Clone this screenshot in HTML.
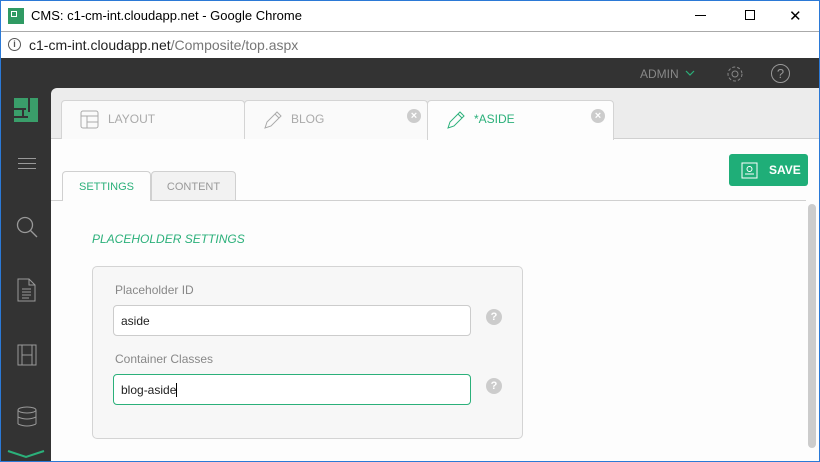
<!DOCTYPE html>
<html><head><meta charset="utf-8"><style>
*{box-sizing:border-box;margin:0;padding:0}
body{width:820px;height:462px;overflow:hidden;background:#fff;font-family:"Liberation Sans",sans-serif;position:relative}
.a{position:absolute}
.win{left:0;top:0;width:820px;height:462px;border:1px solid #2b79d6}
.tab{position:absolute;top:100px;height:39px;background:#fafafa;border:1px solid #d4d4d4;border-bottom:none;border-radius:4px 4px 0 0;font-size:12px;color:#aaa;padding:11px 0 0 46px}
.x{position:absolute;top:8px;width:14px;height:14px;border-radius:50%;background:#ccc;color:#fff;font-size:11px;line-height:14px;text-align:center;font-weight:bold}
.inp{position:absolute;left:113px;width:358px;height:31px;border:1px solid #ccc;border-radius:4px;background:#fff;font-size:12px;color:#222;padding:8px 0 0 7px}
.q{position:absolute;left:486px;width:16px;height:16px;border-radius:50%;background:#ccc;color:#fff;font-size:11px;font-weight:bold;line-height:16px;text-align:center}
</style></head><body>
<div class="a" style="left:0;top:0;width:820px;height:31px;background:#fff"></div>
<div class="a" style="left:8px;top:8px;width:16px;height:16px;background:#2f9a63"></div>
<div class="a" style="left:11px;top:11px;width:6px;height:6px;border:1px solid #fff"></div>
<div class="a" style="left:31px;top:8px;font-size:13px;color:#000">CMS: c1-cm-int.cloudapp.net - Google Chrome</div>
<div class="a" style="left:695px;top:15px;width:11px;height:1px;background:#000"></div>
<div class="a" style="left:745px;top:10px;width:10px;height:10px;border:1px solid #000"></div>
<div class="a" style="left:789px;top:7px;font-size:15px;color:#000">✕</div>
<div class="a" style="left:0;top:31px;width:820px;height:1px;background:#aaa"></div>
<div class="a" style="left:0;top:32px;width:820px;height:26px;background:#fff"></div>
<div class="a" style="left:8px;top:38px;width:13px;height:13px;border:1.5px solid #555;border-radius:50%;font-size:9px;text-align:center;line-height:10px;color:#555;font-weight:bold">i</div>
<div class="a" style="left:29px;top:37px;font-size:14px;color:#222">c1-cm-int.cloudapp.net<span style="color:#777">/Composite/top.aspx</span></div>
<div class="a" style="left:0;top:58px;width:820px;height:404px;background:#333"></div>
<!-- sidebar icons -->
<div class="a" style="left:14px;top:98px;width:24px;height:24px;background:#3a9e6a"></div>
<div class="a" style="left:14px;top:108px;width:12px;height:2px;background:#333"></div>
<div class="a" style="left:22px;top:108px;width:2px;height:10px;background:#333"></div>
<div class="a" style="left:28px;top:98px;width:2px;height:14px;background:#333"></div>
<div class="a" style="left:14px;top:116px;width:14px;height:2px;background:#333"></div>
<div class="a" style="left:18px;top:158px;width:18px;height:11px;border-top:1px solid #999;border-bottom:1px solid #999"><div style="margin-top:4px;height:1px;background:#999"></div></div>
<svg class="a" style="left:15px;top:215px" width="25" height="25"><circle cx="10" cy="10" r="7.5" fill="none" stroke="#999" stroke-width="1.3"/><path d="M15.5 15.5L22 22" stroke="#999" stroke-width="1.3"/></svg>
<svg class="a" style="left:17px;top:278px" width="20" height="24"><path d="M1 1H12L18 7V23H1Z M12 1V7H18 M5 11H14M5 14H14M5 17H14M5 20H12" fill="none" stroke="#999"/></svg>
<svg class="a" style="left:17px;top:344px" width="20" height="22"><rect x="1" y="1" width="18" height="20" fill="none" stroke="#999"/><path d="M5 1V21M15 1V21M5 11H15" stroke="#999"/></svg>
<svg class="a" style="left:16px;top:406px" width="22" height="22"><ellipse cx="11" cy="4" rx="9" ry="3" fill="none" stroke="#999"/><path d="M2 4V18M20 4V18M2 11Q11 15 20 11M2 18Q11 22 20 18" fill="none" stroke="#999"/></svg>
<svg class="a" style="left:6px;top:449px" width="40" height="10"><path d="M2 2L20 8L38 2" fill="none" stroke="#2bb07a" stroke-width="2"/></svg>
<!-- top bar right -->
<div class="a" style="left:640px;top:67px;font-size:12px;color:#888">ADMIN</div>
<svg class="a" style="left:685px;top:70px" width="10" height="7"><path d="M1 1L5 5L9 1" fill="none" stroke="#2bb07a" stroke-width="1.2"/></svg>
<svg class="a" style="left:725px;top:64px" width="20" height="20"><circle cx="10" cy="10" r="3" fill="none" stroke="#888"/><circle cx="10" cy="10" r="7" fill="none" stroke="#888" stroke-dasharray="3 2"/></svg>
<div class="a" style="left:771px;top:64px;width:19px;height:19px;border:1.3px solid #999;border-radius:50%;color:#999;font-size:13px;text-align:center;line-height:17px">?</div>
<!-- content -->
<div class="a" style="left:51px;top:88px;width:769px;height:374px;background:#ececec;border-radius:6px 0 0 0"></div>
<div class="a" style="left:51px;top:138px;width:769px;height:324px;background:#fdfdfd;border-top:1px solid #d0d0d0"></div>
<div class="tab" style="left:61px;width:184px"><svg class="a" style="left:18px;top:9px" width="20" height="20"><rect x="1" y="1" width="17" height="17" rx="2" fill="none" stroke="#aaa"/><path d="M1 6H18M7 6V18M7 12H18" stroke="#aaa"/></svg>LAYOUT</div>
<div class="tab" style="left:244px;width:184px"><svg class="a" style="left:18px;top:9px" width="20" height="20"><path d="M2 18L4 12L14 2L18 6L8 16Z M12 4L16 8" fill="none" stroke="#aaa"/></svg>BLOG<div class="x" style="left:162px">×</div></div>
<div class="tab" style="left:427px;width:187px;height:40px;background:#fdfdfd;color:#2bb07a"><svg class="a" style="left:18px;top:9px" width="20" height="20"><path d="M2 18L4 12L14 2L18 6L8 16Z M12 4L16 8" fill="none" stroke="#2bb07a"/></svg>*ASIDE<div class="x" style="left:163px">×</div></div>
<!-- save -->
<div class="a" style="left:729px;top:154px;width:79px;height:32px;background:#1fae78;border-radius:3px;color:#fff;font-size:12px;font-weight:bold;padding:9px 0 0 40px">SAVE</div>
<svg class="a" style="left:741px;top:162px" width="17" height="17"><rect x="1" y="1" width="15" height="15" fill="none" stroke="#fff"/><circle cx="8.5" cy="7" r="2.5" fill="none" stroke="#fff"/><path d="M4 12H13" stroke="#fff"/></svg>
<!-- sub tabs -->
<div class="a" style="left:51px;top:200px;width:755px;height:1px;background:#d0d0d0"></div>
<div class="a" style="left:62px;top:171px;width:89px;height:30px;background:#fdfdfd;border:1px solid #d0d0d0;border-bottom:none;border-radius:4px 4px 0 0;font-size:11px;color:#2bb07a;text-align:center;padding-top:9px">SETTINGS</div>
<div class="a" style="left:151px;top:171px;width:85px;height:29px;background:#f2f2f2;border:1px solid #d0d0d0;border-bottom:none;border-radius:4px 4px 0 0;font-size:11px;color:#999;text-align:center;padding-top:9px">CONTENT</div>
<div class="a" style="left:92px;top:232px;font-size:12px;font-style:italic;color:#2bb07a">PLACEHOLDER SETTINGS</div>
<div class="a" style="left:92px;top:266px;width:431px;height:173px;background:#f7f7f7;border:1px solid #d4d4d4;border-radius:5px"></div>
<div class="a" style="left:115px;top:283px;font-size:12px;color:#888">Placeholder ID</div>
<div class="inp" style="top:305px">aside</div>
<div class="q" style="top:309px">?</div>
<div class="a" style="left:115px;top:352px;font-size:12px;color:#888">Container Classes</div>
<div class="inp" style="top:374px;border-color:#2bb07a">blog-aside<span style="border-left:1px solid #000"></span></div>
<div class="q" style="top:378px">?</div>
<div class="a" style="left:808px;top:204px;width:8px;height:244px;background:#ccc;border-radius:4px"></div>
<div class="a win"></div>
</body></html>
